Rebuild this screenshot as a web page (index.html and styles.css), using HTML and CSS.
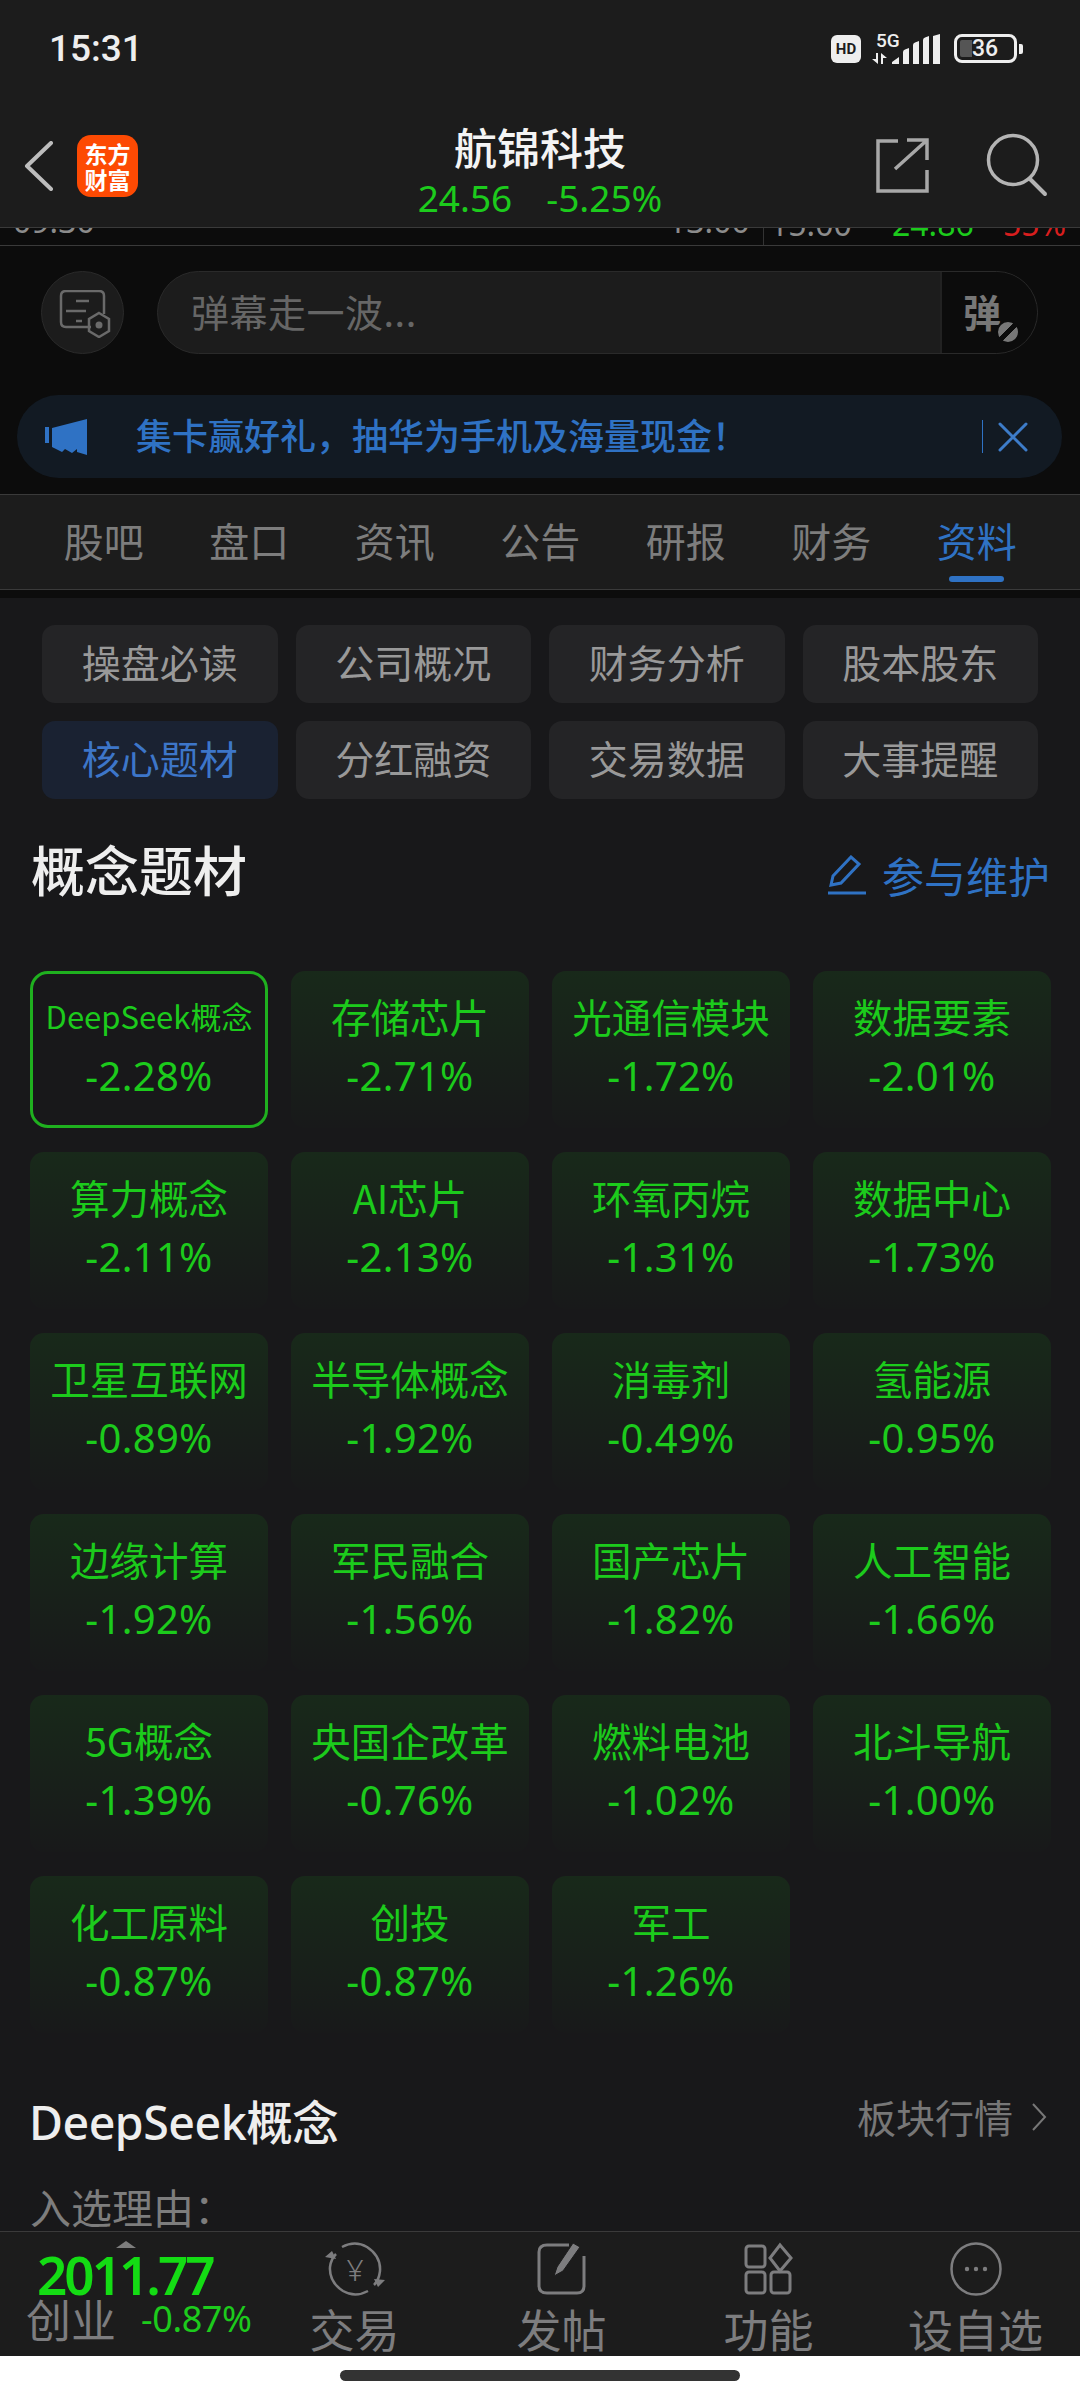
FILE: index.html
```html
<!DOCTYPE html>
<html lang="zh-CN">
<head>
  <meta charset="UTF-8" />
  <meta name="viewport" content="width=device-width, initial-scale=1.0" />
  <title>航锦科技</title>
  <link rel="stylesheet" href="styles.css">
</head>
<body>
<div class="app">

  <header class="top">
    <div class="status">
      <span class="time">15:31</span>
      <div class="status-icons">
        <span class="hd">HD</span>
        <div class="net">
          <span class="net-5g">5G</span>
          <svg class="net-arrows" width="16" height="11" viewBox="0 0 16 11"><path d="M6 0v11L0 6h4V0zM9 11V0l6 5h-4v6z" fill="#eee"/></svg>
        </div>
        <svg class="signal" width="48" height="30" viewBox="0 0 48 30"><path d="M0 30v-2l7-5v7zM11 30V18q0-2 2-2.500l4-1.500v16zM21 30V11q0-2 2-2.500l4-1.500v23zM31 30V6q0-2 2-2.500l4-1.500v28zM41 30V2l7-2v30z" fill="#eee"/></svg>
        <div class="battery">
          <span class="battery-fill"></span>
          <span class="battery-num">36</span>
        </div>
        <span class="battery-tip"></span>
      </div>
    </div>
    <div class="titlebar">
      <svg class="back" width="30" height="50" viewBox="0 0 30 50"><path d="M27 2 3 25l24 23" fill="none" stroke="#bdbdbd" stroke-width="4" stroke-linecap="round" stroke-linejoin="round"/></svg>
      <div class="logo"><span>东方</span><span>财富</span></div>
      <div class="stock">
        <div class="stock-name">航锦科技</div>
        <div class="stock-price"><span>24.56</span><span>-5.25%</span></div>
      </div>
      <svg class="share" width="54" height="56" viewBox="0 0 54 56"><path d="M23 3H3v50h49V32M20 31 51 3M32 2h20v20" fill="none" stroke="#a8a8a8" stroke-width="3.500"/></svg>
      <svg class="search" width="62" height="64" viewBox="0 0 62 64"><circle cx="27" cy="27" r="24.500" fill="none" stroke="#b4b4b4" stroke-width="3.500"/><path d="m44 46 15 15" stroke="#b4b4b4" stroke-width="4" stroke-linecap="round"/></svg>
    </div>
  </header>

  <div class="strip">
    <span class="strip-t1">09:30</span>
    <span class="strip-t2">13:00</span>
    <span class="strip-t3">15:00</span>
    <span class="strip-price">24.86</span>
    <span class="strip-pct">55%</span>
  </div>

  <div class="dark-zone">
    <div class="danmu">
      <div class="danmu-set">
        <svg width="52" height="48" viewBox="0 0 52 48"><path d="M32 37H7q-5 0-5-5V6q0-5 5-5h33q5 0 5 5v18M17 11h13M7 21h20M17 31h6" fill="none" stroke="#6a6a6a" stroke-width="2.500"/><path d="m40 23 10 6v12l-10 6-10-6V29z" fill="none" stroke="#6a6a6a" stroke-width="2.500"/><circle cx="40" cy="35" r="3.500" fill="#6a6a6a"/></svg>
      </div>
      <div class="danmu-input">
        <span class="danmu-text">弹幕走一波...</span>
        <span class="danmu-btn">弹<i class="danmu-off"></i></span>
      </div>
    </div>
    <div class="banner">
      <svg class="banner-horn" width="42" height="36" viewBox="0 0 42 36"><path d="M0 8h4v16H0zM7 9l35-9v36l-10-3v-3l-5 4-7-4-3 3-10-5z" fill="#2f72c4"/></svg>
      <span class="banner-text">集卡赢好礼，抽华为手机及海量现金！</span>
      <span class="banner-sep"></span>
      <svg width="30" height="30" viewBox="0 0 30 30"><path d="m2 2 26 26M28 2 2 28" stroke="#3d7cc9" stroke-width="3" stroke-linecap="round"/></svg>
    </div>
  </div>

  <nav class="tabs">
    <a>股吧</a><a>盘口</a><a>资讯</a><a>公告</a><a>研报</a><a>财务</a><a class="on">资料</a>
  </nav>
  <div class="tabs-gap"></div>

  <main class="content">
    <div class="subnav">
      <a>操盘必读</a><a>公司概况</a><a>财务分析</a><a>股本股东</a>
      <a class="on">核心题材</a><a>分红融资</a><a>交易数据</a><a>大事提醒</a>
    </div>

    <div class="head">
      <h2>概念题材</h2>
      <div class="maintain">
        <svg width="40" height="40" viewBox="0 0 40 40"><path d="M3 30 5 21 23 2l8 7-18 19zM0 38h38" fill="none" stroke="#2f72c4" stroke-width="3"/></svg>
        <span>参与维护</span>
      </div>
    </div>

    <div class="concepts">
      <div class="card sel"><p class="small">DeepSeek概念</p><b>-2.28%</b></div>
      <div class="card"><p>存储芯片</p><b>-2.71%</b></div>
      <div class="card"><p>光通信模块</p><b>-1.72%</b></div>
      <div class="card"><p>数据要素</p><b>-2.01%</b></div>
      <div class="card"><p>算力概念</p><b>-2.11%</b></div>
      <div class="card"><p>AI芯片</p><b>-2.13%</b></div>
      <div class="card"><p>环氧丙烷</p><b>-1.31%</b></div>
      <div class="card"><p>数据中心</p><b>-1.73%</b></div>
      <div class="card"><p>卫星互联网</p><b>-0.89%</b></div>
      <div class="card"><p>半导体概念</p><b>-1.92%</b></div>
      <div class="card"><p>消毒剂</p><b>-0.49%</b></div>
      <div class="card"><p>氢能源</p><b>-0.95%</b></div>
      <div class="card"><p>边缘计算</p><b>-1.92%</b></div>
      <div class="card"><p>军民融合</p><b>-1.56%</b></div>
      <div class="card"><p>国产芯片</p><b>-1.82%</b></div>
      <div class="card"><p>人工智能</p><b>-1.66%</b></div>
      <div class="card"><p>5G概念</p><b>-1.39%</b></div>
      <div class="card"><p>央国企改革</p><b>-0.76%</b></div>
      <div class="card"><p>燃料电池</p><b>-1.02%</b></div>
      <div class="card"><p>北斗导航</p><b>-1.00%</b></div>
      <div class="card"><p>化工原料</p><b>-0.87%</b></div>
      <div class="card"><p>创投</p><b>-0.87%</b></div>
      <div class="card"><p>军工</p><b>-1.26%</b></div>
    </div>

    <div class="detail-head">
      <h3>DeepSeek概念</h3>
      <div class="detail-link">
        <span>板块行情</span>
        <svg width="16" height="30" viewBox="0 0 16 30"><path d="m2 2 12 13L2 28" fill="none" stroke="#777" stroke-width="2"/></svg>
      </div>
    </div>
    <p class="reason">入选理由：</p>
  </main>

  <footer class="bottom">
    <div class="index">
      <i class="index-up"></i>
      <div class="index-num">2011.77</div>
      <div class="index-row"><span class="index-name">创业</span><span class="index-pct">-0.87%</span></div>
    </div>
    <a class="tool">
      <svg width="62" height="54" viewBox="0 0 62 54"><path d="M18 5Q31-2 43 5q14 9 13 24-1 9-6 14M44 49Q31 56 19 49 5 40 6 25q1-8 6-13" fill="none" stroke="#7d7d7f" stroke-width="2.500"/><path d="m1 15 7-6 4 8zM61 38l-7 7-4-8z" fill="#7d7d7f"/><text x="31" y="39" text-anchor="middle" class="yen">¥</text></svg>
      <span>交易</span>
    </a>
    <a class="tool">
      <svg width="50" height="52" viewBox="0 0 50 52"><path d="M32 2H10Q2 2 2 9v34q0 7 8 7h30q7 0 7-7V13" fill="none" stroke="#7d7d7f" stroke-width="3"/><path d="m17 33 3-9L36 0l7 4-17 24z" fill="#7d7d7f" stroke="#1c1c1c" stroke-width="1"/></svg>
      <span>发帖</span>
    </a>
    <a class="tool">
      <svg width="50" height="52" viewBox="0 0 50 52"><g fill="none" stroke="#7d7d7f" stroke-width="3"><rect x="2" y="3" width="19" height="21" rx="3"/><path d="m36 2 11 13-11 13-10-13z"/><rect x="2" y="29" width="19" height="21" rx="3"/><rect x="27" y="29" width="19" height="21" rx="3"/></g></svg>
      <span>功能</span>
    </a>
    <a class="tool">
      <svg width="52" height="54" viewBox="0 0 52 54"><ellipse cx="26" cy="27" rx="24.500" ry="25.500" fill="none" stroke="#7d7d7f" stroke-width="2.500"/><circle cx="17" cy="27" r="2.200" fill="#7d7d7f"/><circle cx="26" cy="27" r="2.200" fill="#7d7d7f"/><circle cx="35" cy="27" r="2.200" fill="#7d7d7f"/></svg>
      <span>设自选</span>
    </a>
  </footer>

  <div class="home"><span></span></div>
</div>
</body>
</html>
```

FILE: styles.css
```css
:root {
  --bg: #18181a;
  --bar: #1c1c1c;
  --dark: #0c0c0c;
  --green: #1ccb1c;
  --blue: #2f72c4;
  --line: #3a3a3a;
}
html, body { margin: 0; background: #fff; }
body {
  font-family: "Noto Sans", "Noto Sans CJK SC", sans-serif;
  color: #999;
}
h2, h3, p { margin: 0; font-weight: 400; }
a { display: block; }
.app {
  width: 1080px;
  height: 2400px;
  display: flex;
  flex-direction: column;
  overflow: hidden;
}

/* top */
.top { height: 227px; background: var(--bar); border-bottom: 1px solid var(--line); }
.status {
  height: 100px;
  display: flex;
  justify-content: space-between;
  padding: 29px 57px 0 49px;
  box-sizing: border-box;
}
.time { font: 500 37px/40px Roboto, sans-serif; color: #eee; }
.status-icons { display: flex; align-items: flex-start; height: 34px; margin-top: 3px; }
.hd {
  width: 30px;
  height: 28px;
  margin-top: 3px;
  border-radius: 6px;
  background: #eee;
  color: #1c1c1c;
  font: 700 15px/28px Roboto, sans-serif;
  text-align: center;
}
.net { width: 20px; margin-left: 11px; display: flex; flex-direction: column; align-items: flex-start; white-space: nowrap; }
.net-5g { font: 500 19px/18px Roboto, sans-serif; color: #eee; padding-left: 4px; }
.net-arrows { margin-top: 3px; }
.signal { margin-top: 2px; }
.battery {
  width: 63px;
  height: 29px;
  margin: 2px 0 0 14px;
  box-sizing: border-box;
  border: 3px solid #eee;
  border-radius: 8px;
  position: relative;
  color: #eee;
  font: 500 23px/23px Roboto, sans-serif;
  padding-left: 15px;
}
.battery-fill {
  position: absolute;
  left: 3px;
  top: 3px;
  width: 12px;
  height: 17px;
  background: #555;
  border-radius: 2px 0 0 2px;
}
.battery-num { position: relative; }
.battery-tip { width: 4px; height: 10px; margin: 12px 0 0 2px; background: #eee; border-radius: 0 2px 2px 0; }

.titlebar {
  height: 127px;
  display: flex;
  align-items: flex-start;
  position: relative;
}
.back { margin: 41px 0 0 24px; }
.logo {
  width: 61px;
  height: 62px;
  flex: none;
  margin: 35px 0 0 23px;
  border-radius: 14px;
  background: #fd4a03;
  color: #fff;
  font-size: 23px;
  line-height: 26px;
  font-weight: 700;
  font-family: "Noto Sans CJK SC", sans-serif;
  display: flex;
  flex-direction: column;
  align-items: center;
  justify-content: center;
}
.stock { width: 320px; margin: 16px 0 0 242px; text-align: center; flex: none; }
.stock-name {
  font: 500 43px/60px "Noto Sans CJK SC", sans-serif;
  color: #f4f4f4;
}
.stock-price {
  display: flex;
  justify-content: center;
  gap: 34px;
  font: 400 37px/44px "Noto Sans", sans-serif;
  color: var(--green);
}
.share { flex: none; margin: 38px 0 0 175px; }
.search { flex: none; margin: 33px 0 0 57px; }

/* chart strip */
.strip {
  height: 17px;
  background: var(--dark);
  border-bottom: 1px solid var(--line);
  overflow: hidden;
  position: relative;
  font: 400 32px/36px "Noto Sans", sans-serif;
  color: #8c8c8c;
}
.strip span { position: absolute; bottom: 3px; }
.strip .strip-t1 { left: 13px; bottom: 6px; }
.strip .strip-t2 { left: 668px; bottom: 6px; }
.strip-t3 { left: 770px; }
.strip-price { left: 892px; color: var(--green); }
.strip-pct { left: 1003px; color: #d81e1e; }
.strip::after {
  content: "";
  position: absolute;
  left: 763px;
  top: 0;
  bottom: 0;
  width: 1px;
  background: #333;
}

.dark-zone { height: 248px; background: var(--dark); padding-top: 25px; box-sizing: border-box; }
.danmu { display: flex; height: 83px; padding-left: 41px; }
.danmu-set {
  width: 83px;
  height: 83px;
  box-sizing: border-box;
  border: 1px solid #2a2a2a;
  border-radius: 50%;
  background: var(--bar);
  display: flex;
  align-items: center;
  justify-content: center;
  flex: none;
  padding: 2px 0 0 4px;
}
.danmu-input {
  width: 881px;
  margin-left: 33px;
  box-sizing: border-box;
  border: 1px solid #2a2a2a;
  border-radius: 42px;
  background: var(--bar);
  display: flex;
  overflow: hidden;
}
.danmu-text {
  flex: 1;
  padding-left: 33px;
  color: #666;
  letter-spacing: 0.5px;
  font: 400 38px/78px "Noto Sans CJK SC", sans-serif;
}
.danmu-btn {
  width: 97px;
  box-sizing: border-box;
  border-left: 2px solid #222;
  background: var(--dark);
  padding-left: 21px;
  color: #777;
  font: 700 38px/78px "Noto Sans CJK SC", sans-serif;
  position: relative;
}
.danmu-off {
  position: absolute;
  left: 54px;
  top: 48px;
  width: 20px;
  height: 20px;
  border-radius: 50%;
  background: linear-gradient(135deg, #777 42%, #0c0c0c 42%, #0c0c0c 58%, #777 58%);
  border: 2px solid #0c0c0c;
  box-sizing: content-box;
}
.banner {
  height: 83px;
  margin: 41px 18px 0 17px;
  border-radius: 42px;
  background: #121a23;
  display: flex;
  align-items: center;
  padding: 0 34px 0 28px;
}
.banner-horn { flex: none; }
.banner-text {
  flex: 1;
  margin: -6px 0 0 49px;
  color: var(--blue);
  font: 500 36px/44px "Noto Sans CJK SC", sans-serif;
  white-space: nowrap;
}
.banner-sep { width: 1px; height: 33px; margin-right: 15px; background: var(--blue); }

/* tabs */
.tabs {
  height: 94px;
  background: var(--bar);
  border-top: 1px solid var(--line);
  border-bottom: 1px solid var(--line);
  display: grid;
  grid-template-columns: repeat(7, 145.5px);
  padding-left: 31px;
}
.tabs a {
  text-align: center;
  font: 400 40px/90px "Noto Sans CJK SC", sans-serif;
  color: #7d7d7d;
  position: relative;
}
.tabs a.on { color: var(--blue); }
.tabs a.on::after {
  content: "";
  position: absolute;
  left: 45px;
  bottom: 7px;
  width: 55px;
  height: 6px;
  border-radius: 3px;
  background: var(--blue);
}
.tabs-gap { height: 8px; background: var(--dark); flex: none; }

/* content */
.content { flex: 1; min-height: 0; background: var(--bg); overflow: hidden; padding: 27px 30px 0 30px; }
.subnav {
  display: grid;
  grid-template-columns: repeat(4, 1fr);
  gap: 18px;
  margin: 0 12px;
}
.subnav a {
  height: 78px;
  background: #242426;
  border-radius: 13px;
  text-align: center;
  color: #999;
  font: 400 39px/72px "Noto Sans CJK SC", sans-serif;
}
.subnav a.on { background: #1a2232; color: #3d76c9; }
.head {
  height: 64px;
  margin-top: 41px;
  display: flex;
  align-items: center;
  justify-content: space-between;
}
.head h2 { margin: -6px 0 0 1px; font: 500 54px/64px "Noto Sans CJK SC", sans-serif; color: #eee; }
.maintain { display: flex; align-items: center; gap: 14px; color: var(--blue); margin-top: 5px; }
.maintain span { font: 400 42px/56px "Noto Sans CJK SC", sans-serif; }
.concepts {
  display: grid;
  grid-template-columns: repeat(4, 238px);
  column-gap: 23px;
  row-gap: 24px;
  margin-top: 67px;
}
.card {
  height: 157px;
  box-sizing: border-box;
  padding-top: 20px;
  border-radius: 14px;
  background: linear-gradient(#18291a, #18191a);
  text-align: center;
  color: var(--green);
}
.card p { font: 400 39.500px/50px "Noto Sans CJK SC", sans-serif; white-space: nowrap; }
.card p.small { font-size: 31px; }
.card b { display: block; margin-top: 9px; font: 400 40px/52px "Noto Sans", sans-serif; letter-spacing: 0.3px; }
.card.sel {
  background: none;
  border: 3px solid #1fb01f;
  border-radius: 18px;
  padding-top: 17px;
}
.detail-head {
  height: 60px;
  margin-top: 59px;
  display: flex;
  align-items: flex-start;
  justify-content: space-between;
}
.detail-head h3 { font: 500 46.500px/60px "Noto Sans", "Noto Sans CJK SC", sans-serif; color: #eee; letter-spacing: -0.5px; margin-left: -1px; }
.detail-link { display: flex; align-items: center; gap: 18px; color: #777; height: 49px; margin-right: 3px; }
.detail-link span { font: 400 39px/49px "Noto Sans CJK SC", sans-serif; }
.reason { margin-top: 29px; font: 400 41px/50px "Noto Sans CJK SC", sans-serif; color: #7d7d7d; }

/* bottom bar */
.bottom {
  height: 125px;
  flex: none;
  box-sizing: border-box;
  background: var(--bar);
  border-top: 1px solid var(--line);
  display: flex;
  overflow: hidden;
}
.index { width: 251px; flex: none; position: relative; padding-left: 26px; box-sizing: border-box; }
.index-up {
  position: absolute;
  left: 116px;
  top: 9px;
  border: 10px solid transparent;
  border-top: 0;
  border-bottom: 7px solid #7d7d7d;
}
.index-num {
  margin: 18px 0 0 11px;
  font: 600 53px/50px "Noto Sans", sans-serif;
  letter-spacing: -3px;
  color: #14dc14;
}
.index-row { display: flex; align-items: center; margin-top: -6px; white-space: nowrap; }
.index-name { font: 400 45px/50px "Noto Sans CJK SC", sans-serif; color: #7d7d7f; }
.index-pct { margin-left: 25px; font: 400 36px/44px "Noto Sans", sans-serif; letter-spacing: -0.4px; color: var(--green); }
.tool {
  width: 207px;
  flex: none;
  display: flex;
  flex-direction: column;
  align-items: center;
  padding-top: 10px;
  box-sizing: border-box;
  color: #7d7d7f;
}
.tool svg { height: 54px; flex: none; }
.tool span { margin-top: 7px; font: 400 45px/52px "Noto Sans CJK SC", sans-serif; white-space: nowrap; }
.yen { font: 300 30px "Noto Sans", sans-serif; fill: #7d7d7f; }

.home { height: 44px; flex: none; background: #fff; padding-top: 14px; box-sizing: border-box; }
.home span { display: block; width: 400px; height: 11px; margin-left: 340px; border-radius: 6px; background: #333; }
```
